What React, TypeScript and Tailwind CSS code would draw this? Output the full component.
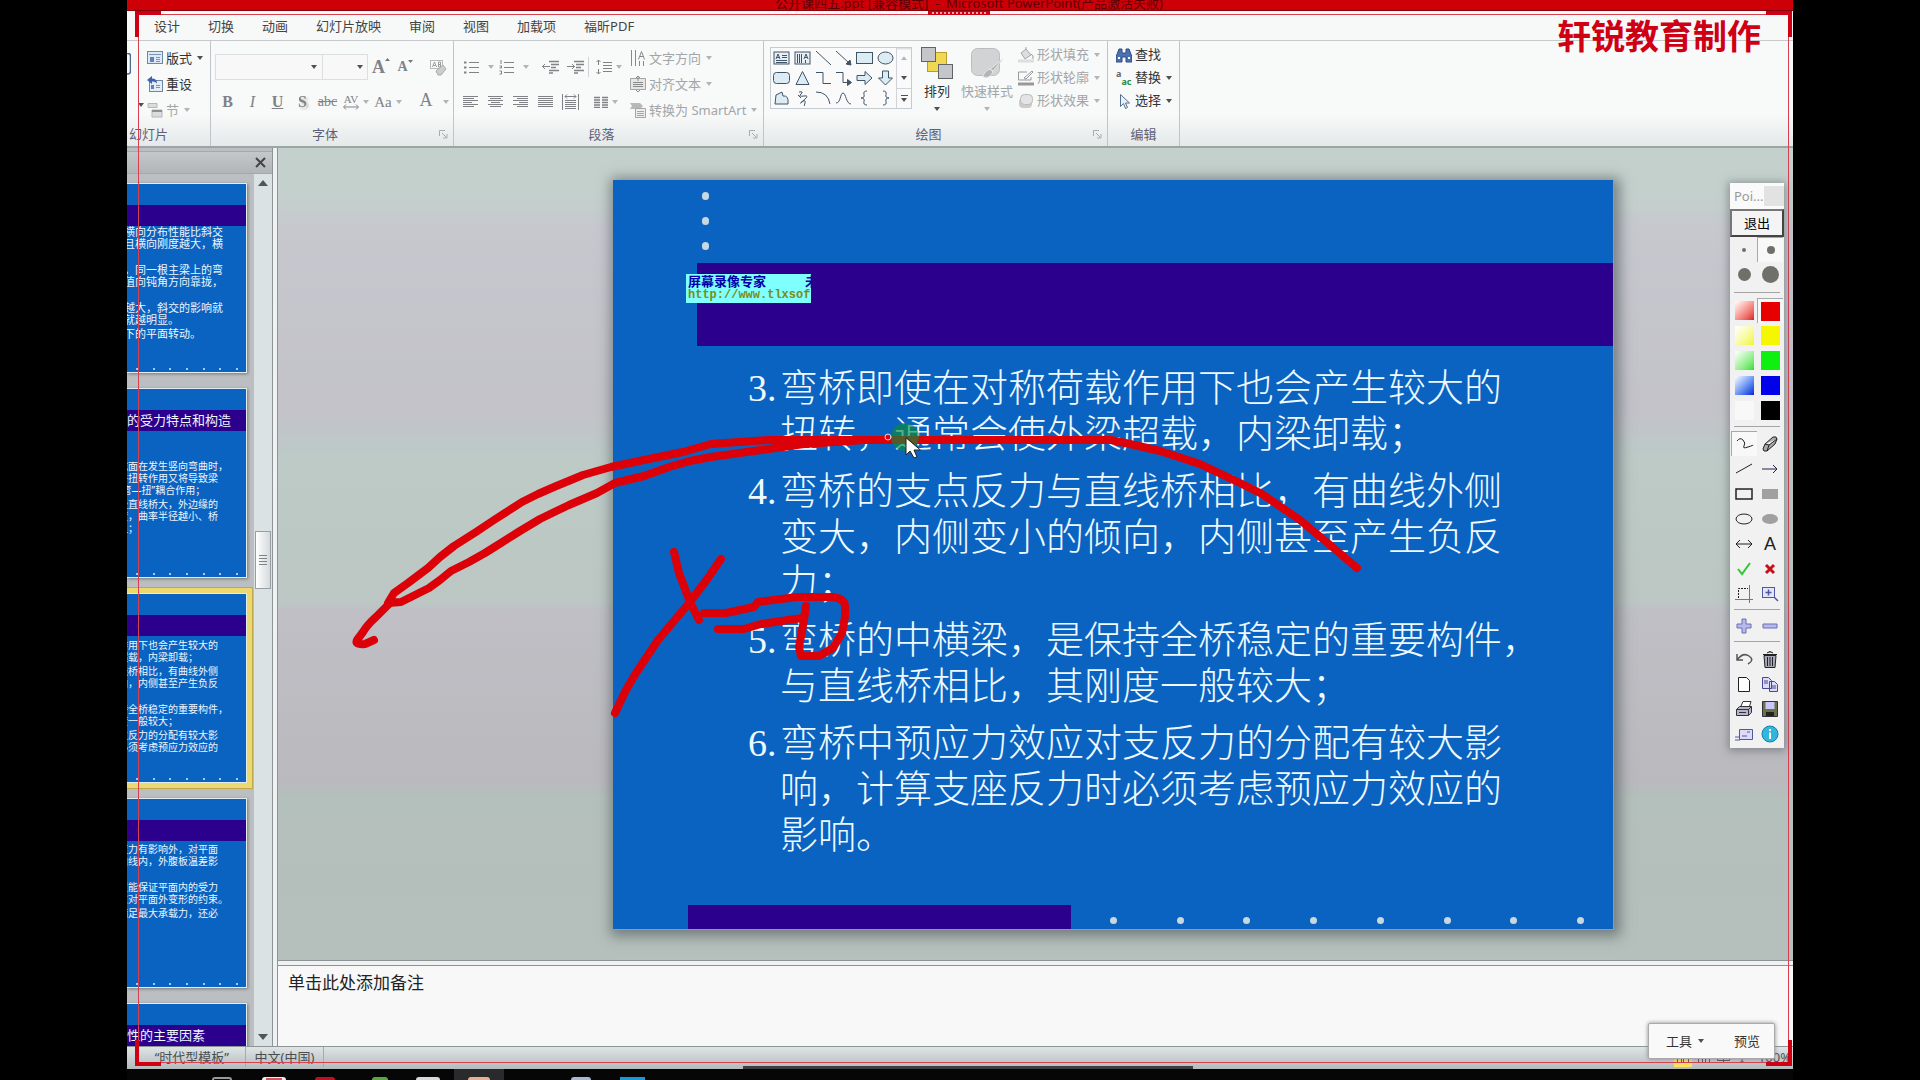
import type { ReactNode } from "react";

const uiFont = "font-['Noto_Sans','Noto_Sans_CJK_SC',sans-serif]";

const tabs = ["设计", "切换", "动画", "幻灯片放映", "审阅", "视图", "加载项", "福昕PDF"];

const slideText = [
  { no: "3.", lines: ["弯桥即使在对称荷载作用下也会产生较大的", "扭转，通常会使外梁超载，内梁卸载；"] },
  { no: "4.", lines: ["弯桥的支点反力与直线桥相比，有曲线外侧", "变大，内侧变小的倾向，内侧甚至产生负反", "力；"] },
  { no: "5.", lines: ["弯桥的中横梁，是保持全桥稳定的重要构件，", "与直线桥相比，其刚度一般较大；"] },
  { no: "6.", lines: ["弯桥中预应力效应对支反力的分配有较大影", "响，计算支座反力时必须考虑预应力效应的", "影响。"] },
];

const blank = "\u00a0";

const thumbs = [
  {
    title: "",
    body: "pt-0 -ml-[3px] text-[11px]",
    paragraphs: [
      ["横向分布性能比斜交", "且横向刚度越大，横", blank],
      ["，同一根主梁上的弯", "值向钝角方向靠拢，", blank],
      ["越大，斜交的影响就", "就越明显。"],
      ["下的平面转动。"],
    ],
  },
  {
    title: "的受力特点和构造",
    body: "pt-[29px] -ml-[9px] text-[10px]",
    paragraphs: [
      ["截面在发生竖向弯曲时，", "并扭转作用又将导致梁", "“弯—扭”耦合作用；"],
      ["径直线桥大，外边缘的", "度，曲率半径越小、桥", "显；"],
    ],
  },
  {
    title: "",
    active: true,
    body: "pt-[3px] -ml-[9px] text-[10px]",
    paragraphs: [
      ["作用下也会产生较大的", "超载，内梁卸载；"],
      ["线桥相比，有曲线外侧", "向，内侧甚至产生负反", blank],
      ["持全桥稳定的重要构件，", "度一般较大；"],
      ["支反力的分配有较大影", "必须考虑预应力效应的"],
    ],
  },
  {
    title: "",
    body: "pt-[2px] -ml-[9px] text-[10px]",
    paragraphs: [
      ["应力有影响外，对平面", "曲线内，外腹板温差影", blank],
      ["置能保证平面内的受力", "意对平面外变形的约束。"],
      ["满足最大承载力，还必"],
    ],
  },
  { title: "性的主要因素", body: "pt-0 text-[10px]", paragraphs: [] },
];

const swatches = [
  ["bg-linear-to-br from-white to-[#d8102a]", "bg-[#e60000]", "红"],
  ["bg-linear-to-br from-white to-[#f4f400]", "bg-[#f6f600]", "黄"],
  ["bg-linear-to-br from-white to-[#10e020]", "bg-[#10f010]", "绿"],
  ["bg-linear-to-br from-white to-[#1010d8]", "bg-[#0000ea]", "蓝"],
  ["bg-[#f8f8f8]", "bg-black", "黑"],
];

function Caret({ faded = false }: { faded?: boolean }) {
  return (
    <svg width="6" height="4" viewBox="0 0 6 4" className={faded ? "text-[#b4b4b4]" : "text-[#505050]"}>
      <path d="M0 0h6L3 4z" fill="currentColor" />
    </svg>
  );
}

function Divider() {
  return <span className="h-5 w-px shrink-0 bg-[#d0d3d5]" />;
}

function Icon({ w = 16, h = 16, children }: { w?: number; h?: number; children: ReactNode }) {
  return (
    <svg width={w} height={h} viewBox={`0 0 ${w} ${h}`} fill="none" stroke="currentColor" className="shrink-0">
      {children}
    </svg>
  );
}

function ToolButton({ label, className = "w-[25px]", children }: { label: string; className?: string; children: ReactNode }) {
  return (
    <button type="button" aria-label={label} className={`flex h-6 shrink-0 items-center justify-center gap-1 ${className}`}>
      {children}
    </button>
  );
}

function RowButton({ icon, text, faded, caret = true, className = "h-[26px]" }: { icon: ReactNode; text: string; faded?: boolean; caret?: boolean; className?: string }) {
  return (
    <button type="button" className={`flex items-center gap-[3px] whitespace-nowrap ${faded ? "text-[#a3a5a8]" : "text-[#333]"} ${className}`}>
      {icon}
      <span>{text}</span>
      {caret && <span className="pl-[2px]"><Caret faded={faded} /></span>}
    </button>
  );
}

function Group({ label, width, launcher = true, labelClass = "", children }: { label: string; width: string; launcher?: boolean; labelClass?: string; children: ReactNode }) {
  return (
    <section className={`flex shrink-0 flex-col border-r border-[#c0c4c8] ${width}`}>
      <div className="flex h-[82px]">{children}</div>
      <div className="flex h-6 items-center justify-center text-[#5c5f78]">
        <span className={`flex-1 text-center ${labelClass}`}>{label}</span>
        {launcher && (
          <button type="button" aria-label={`${label}设置`} className="w-[14px] text-[#a8acb0]">
            <Icon w={9} h={9}>
              <path d="M.5 6V.5H6M3 3l4 4M8 4v4H4" />
            </Icon>
          </button>
        )}
      </div>
    </section>
  );
}

function Lines({ rows }: { rows: [number, number][] }) {
  return (
    <Icon w={16} h={14}>
      {rows.map(([a, b], i) => (
        <path key={i} d={`M${a} ${i * 2 + 1.5}H${b}`} />
      ))}
    </Icon>
  );
}

function SlidesGroup() {
  return (
    <Group label="幻灯片" width="w-[84px]" launcher={false} labelClass="pr-10">
      <div className="flex w-5 flex-col justify-between overflow-hidden py-3 text-[#4a6a8c]">
        <Icon w={4} h={22}><path d="M0 .5h1Q3.500.5 3.500 3v15q0 3-2.500 3H0" strokeWidth="1.500" /></Icon>
        <span className="flex items-center gap-2 self-end pr-[3px] pb-1"><Caret /></span>
      </div>
      <div className="flex flex-col pt-1">
        <RowButton
          text="版式"
          icon={
            <Icon>
              <rect x=".5" y="1.5" width="15" height="12" fill="#dfeaf6" stroke="#6d87a8" />
              <path d="M2 4.500h12M9 7.500h4M9 9.500h4M9 11.500h4" stroke="#7a94b4" />
              <rect x="3" y="7" width="4" height="5" fill="#5c86b8" stroke="none" />
            </Icon>
          }
        />
        <RowButton
          text="重设"
          caret={false}
          icon={
            <Icon>
              <rect x="2.500" y="4.500" width="13" height="11" fill="#e4edf7" stroke="#6d87a8" />
              <path d="M9 9.500h4M9 11.500h4" stroke="#7a94b4" />
              <rect x="4" y="9" width="3" height="4" fill="#5c86b8" stroke="none" />
              <path d="M0 4l5-4v2.500q5 0 5 5Q8 5 5 5.500V8z" fill="#3d62b0" stroke="none" />
            </Icon>
          }
        />
        <RowButton
          text="节"
          faded
          icon={
            <Icon>
              <path d="M1 1.500h9M1 1.500v4h9v-4M5 8v7h10V8z" stroke="#b4b6b8" fill="#dcdcdc" />
              <path d="M5 9h10" stroke="#909090" strokeWidth="2" />
            </Icon>
          }
        />
      </div>
    </Group>
  );
}

function FontGroup() {
  return (
    <Group label="字体" width="w-[243px]">
      <div className="flex flex-col pt-2 pl-1 font-['Liberation_Serif',serif] text-[#808285]">
        <div className="flex h-9 items-center">
          <div className="relative flex">
            <select aria-label="字体" className="h-[26px] w-[108px] appearance-none border border-[#dcdee0] bg-[#f8f8f8]" />
            <span className="pointer-events-none absolute top-[11px] right-[6px]"><Caret /></span>
          </div>
          <div className="relative flex">
            <select aria-label="字号" className="h-[26px] w-[45px] appearance-none border border-l-0 border-[#dcdee0] bg-[#f8f8f8]" />
            <span className="pointer-events-none absolute top-[11px] right-[5px]"><Caret /></span>
          </div>
          <ToolButton label="增大字号" className="w-[26px]">
            <span className="flex items-start text-[18px] leading-none font-bold">A<svg width="5" height="3"><path d="M0 3h5L2.500 0z" fill="#777" /></svg></span>
          </ToolButton>
          <ToolButton label="减小字号" className="w-[22px]">
            <span className="flex items-start text-[14px] leading-none font-bold">A<svg width="5" height="3"><path d="M0 0h5L2.500 3z" fill="#777" /></svg></span>
          </ToolButton>
          <span className="pl-1"><Divider /></span>
          <ToolButton label="清除格式" className="ml-1 w-7">
            <Icon w={18} h={17}>
              <rect x="1.500" y="1.500" width="12" height="8" stroke="#b8b8b8" />
              <path d="M3.500 8l2-5 2 5M4.500 6.500h2M9.500 3v5h2V3zM9.500 5.500h2" stroke="#9a9a9a" />
              <path d="M7 12l7-6 3 4-5 6H9z" fill="#ccc" stroke="#aaa" />
            </Icon>
          </ToolButton>
        </div>
        <div className="flex h-[34px] items-center text-[16px] leading-none">
          <ToolButton label="加粗"><b>B</b></ToolButton>
          <ToolButton label="倾斜"><i>I</i></ToolButton>
          <ToolButton label="下划线"><b className="font-semibold underline">U</b></ToolButton>
          <ToolButton label="阴影"><b className="drop-shadow-[2px_2px_1px_#bbb]">S</b></ToolButton>
          <ToolButton label="删除线"><span className="text-[14px] line-through">abc</span></ToolButton>
          <ToolButton label="字符间距" className="w-8">
            <span className="flex flex-col items-center text-[11px] leading-[9px]">AV
              <Icon w={16} h={6}><path d="M1 3h14M3 .5L.5 3 3 5.500M13 .5L15.500 3 13 5.500" /></Icon>
            </span>
            <Caret faded />
          </ToolButton>
          <ToolButton label="更改大小写" className="w-8"><span className="text-[15px]">Aa</span><Caret faded /></ToolButton>
          <span className="pl-[5px]"><Divider /></span>
          <ToolButton label="字体颜色" className="ml-2 w-[34px]">
            <span className="pb-1 text-[18px]">A</span><span className="pl-[6px]"><Caret faded /></span>
          </ToolButton>
        </div>
      </div>
    </Group>
  );
}

function ParagraphGroup() {
  return (
    <Group label="段落" width="w-[310px]">
      <div className="flex w-44 flex-col pt-2 text-[#808285]">
        <div className="flex h-9 items-center pl-2">
          <ToolButton label="项目符号" className="w-[34px]">
            <Icon w={16} h={14}><path d="M5 2.500h10M5 7.500h10M5 12.500h10" /><path d="M0 2.500h2.500M0 7.500h2.500M0 12.500h2.500" strokeWidth="2" /></Icon>
            <span className="pl-1"><Caret faded /></span>
          </ToolButton>
          <ToolButton label="编号" className="w-[36px]">
            <Icon w={16} h={16}><path d="M5 3.500h10M5 8.500h10M5 13.500h10" /><path d="M2 1v4M.5 7h2v2h-2M.5 12h2v3h-2" /></Icon>
            <span className="pl-1"><Caret faded /></span>
          </ToolButton>
          <span className="px-[3px]"><Divider /></span>
          <ToolButton label="减少缩进"><Icon w={17} h={14}><path d="M7 1.500h10M9 4.500h8M9 7.500h5M7 10.500h10M7 13h4" strokeWidth="1.500" /><path d="M0 6.500h8M3 4L.5 6.500 3 9" /></Icon></ToolButton>
          <ToolButton label="增加缩进"><Icon w={17} h={14}><path d="M7 1.500h10M9 4.500h8M9 7.500h5M7 10.500h10M7 13h4" strokeWidth="1.500" /><path d="M0 6.500h8M5 4l2.500 2.500L5 9" /></Icon></ToolButton>
          <Divider />
          <ToolButton label="行距" className="w-[40px]">
            <Icon w={16} h={16}><path d="M2.500 1v5M.5 3l2-2 2 2M2.500 10v5M.5 13l2 2 2-2M7 3.500h9M7 6.500h9M7 9.500h9M7 12.500h9" /></Icon>
            <Caret faded />
          </ToolButton>
        </div>
        <div className="flex h-[34px] items-center pl-1">
          <ToolButton label="左对齐"><Lines rows={[[0, 15], [0, 11], [0, 15], [0, 9], [0, 15], [0, 11]]} /></ToolButton>
          <ToolButton label="居中"><Lines rows={[[0, 15], [2, 13], [0, 15], [3, 12], [0, 15], [2, 13]]} /></ToolButton>
          <ToolButton label="右对齐"><Lines rows={[[0, 15], [4, 15], [0, 15], [6, 15], [0, 15], [4, 15]]} /></ToolButton>
          <ToolButton label="两端对齐"><Lines rows={[[0, 15], [0, 15], [0, 15], [0, 15], [0, 15], [0, 15]]} /></ToolButton>
          <ToolButton label="分散对齐">
            <Icon w={17} h={16}><path d="M.5 0v16M16.500 0v16M3 2.500h11M3 6.500h11M3 8.500h11M3 10.500h11M3 12.500h11M3 14.500h11M5 .5l-2 2 2 2M12 .5l2 2-2 2" /></Icon>
          </ToolButton>
          <span className="pl-[3px]"><Divider /></span>
          <ToolButton label="分栏" className="w-10">
            <Icon w={14} h={12}><path d="M0 1.500h6M0 4h6M0 6.500h6M0 9h6M0 11.500h6M8 1.500h6M8 4h6M8 6.500h6M8 9h6M8 11.500h6" strokeWidth="1.500" /></Icon>
            <Caret faded />
          </ToolButton>
        </div>
      </div>
      <div className="flex flex-col pt-1">
        <RowButton faded text="文字方向" icon={<Icon><path d="M1.500 0v16M5.500 0v16M9.500 11v5M13.500 11v5M8.500 9.500l3-8 3 8M9.500 6.500h4" stroke="#888" /></Icon>} />
        <RowButton faded text="对齐文本" icon={<Icon><path d="M.5 2.500h15v11H.5z" fill="#e6e6e6" /><path d="M3 6.500h10M3 8.500h10M3 10.500h10M8 0v5M6 2l2-2 2 2M6 14l2 2 2-2" stroke="#888" /></Icon>} />
        <RowButton faded text="转换为 SmartArt" icon={<Icon><path d="M0 1h10l3 3-3 3H0l2-3z" fill="#b8b8b8" stroke="none" /><path d="M5.500 6.500h10v9h-10zM7 9.500h7M7 11.500h7M7 13.500h7" fill="#eee" /></Icon>} />
      </div>
    </Group>
  );
}

const shapes = [
  <><rect x="1" y="2" width="15" height="12" fill="#e6f0f6" /><path d="M3 9l2-5 2 5M4 7.500h2M9 5.500h5M9 7.500h5M3 10.500h11M3 12.500h11" /></>,
  <><rect x="1" y="2" width="15" height="12" fill="#e6f0f6" /><path d="M3.500 4v9M5.500 4v9M7.500 4v9M10 9l2-5 2 5M11 7.500h2M11.500 10v3" /></>,
  <path d="M1 1l15 14" />,
  <><path d="M1 1l13 12" /><path d="M16 15l-5-1 4-4z" fill="currentColor" /></>,
  <rect x=".5" y="2.500" width="16" height="11" fill="#dcecf4" />,
  <ellipse cx="8.500" cy="8" rx="7.500" ry="6" fill="#dcecf4" />,
  <rect x=".5" y="2.500" width="16" height="11" rx="3" fill="#dcecf4" />,
  <path d="M8.500 1.500l6.500 13H2z" fill="#dcecf4" />,
  <path d="M1 2.500h7v11h8" />,
  <><path d="M1 2.500h7v10h6" /><path d="M16.500 12.500l-4-3v6z" fill="currentColor" /></>,
  <path d="M1 5.500h8v-4l7 6.500-7 6.500v-4H1z" fill="#dcecf4" />,
  <path d="M5.500 1h6v7h4l-7 7-7-7h4z" fill="#dcecf4" />,
  <path d="M2 14l1-9 6-3 1 4q6-1 5 8z" fill="#dcecf4" />,
  <path d="M5 2q5-1 2 2t3 2 0 4-2 2 3 1-1 3M4 5l3 3" />,
  <path d="M1 2q12 0 14 12" />,
  <path d="M1 13C6 13 5 3 8 3s3 11 8 11" />,
  <path d="M11 1Q7 1 8 4.500T5 8q4 0 3 3.500T11 15" />,
  <path d="M6 1q4 0 3 3.500T12 8q-4 0-3 3.500T6 15" />,
];

function DrawingGroup() {
  return (
    <Group label="绘图" width="w-[344px]">
      <div className="flex w-full pt-[6px] pl-[6px]">
        <div className="flex h-[62px] w-[142px] border border-[#c4ccd2] bg-[#fafafa]">
          <div className="grid flex-1 grid-cols-6 grid-rows-3 place-items-center text-[#405468]">
            {shapes.map((shape, i) => (
              <button key={i} type="button" aria-label={`形状 ${i + 1}`}>
                <Icon w={17} h={16}>{shape}</Icon>
              </button>
            ))}
          </div>
          <div className="flex w-[15px] flex-col divide-y divide-[#d0d4d8] border-l border-[#d0d4d8]">
            <button type="button" aria-label="上一行" className="flex flex-1 rotate-180 items-center justify-center"><Caret faded /></button>
            <button type="button" aria-label="下一行" className="flex flex-1 items-center justify-center"><Caret /></button>
            <button type="button" aria-label="其他" className="flex flex-1 flex-col items-center justify-center gap-[2px]"><span className="h-px w-[7px] bg-[#505050]" /><Caret /></button>
          </div>
        </div>
        <button type="button" className="flex w-[50px] flex-col items-center text-[#333]">
          <Icon w={32} h={32}>
            <rect x="6.500" y="5.500" width="19" height="19" fill="#f0d850" stroke="#b89c30" />
            <rect x=".5" y=".5" width="14" height="14" fill="#c4c6ca" stroke="#606468" />
            <rect x="17.500" y="17.500" width="14" height="14" fill="#c4c6ca" stroke="#606468" />
          </Icon>
          <span className="pt-[3px] pb-[6px] leading-[19px]">排列</span>
          <Caret />
        </button>
        <button type="button" className="flex w-[50px] flex-col items-center whitespace-nowrap text-[#a3a5a8]">
          <Icon w={34} h={32}>
            <rect x="1.500" y="1.500" width="28" height="27" rx="6" fill="#d2d3d5" stroke="#bcbdbf" />
            <path d="M33 12L23 24l-3-2zM20 22q-6 2-7 8 7 2 10-5z" fill="#b4b5b7" stroke="#e6e6e6" />
          </Icon>
          <span className="pt-[3px] pb-[6px] leading-[19px]">快速样式</span>
          <Caret faded />
        </button>
        <div className="-mt-1 flex flex-col pl-[6px]">
          <RowButton faded className="h-[23px]" text="形状填充" icon={<Icon><path d="M3 6l5-4 5 6-6 4zM8 2V0M13 7q3 1 2 5" fill="#ddd" /><path d="M0 14h16" strokeWidth="3" stroke="#ddd" /></Icon>} />
          <RowButton faded className="h-[23px]" text="形状轮廓" icon={<Icon><path d="M9 2H.5v8H13V7M6 8l8-7 1 1-7 7z" stroke="#999" /><path d="M0 14h16" strokeWidth="3" stroke="#999" /></Icon>} />
          <RowButton faded className="h-[23px]" text="形状效果" icon={<Icon><rect x="1" y="5" width="13" height="10" rx="4" fill="#ccc" stroke="none" /><rect x="2.500" y="1.500" width="12" height="10" rx="4" fill="#e4e4e4" stroke="#bbb" /></Icon>} />
        </div>
      </div>
    </Group>
  );
}

function EditingGroup() {
  return (
    <Group label="编辑" width="w-[72px]" launcher={false}>
      <div className="flex flex-col pt-[2px] pl-2">
        <RowButton
          className="h-[23px]"
          text="查找"
          caret={false}
          icon={<Icon><path d="M3 2h3v4h4V2h3l3 8v5h-6v-5H6v5H0v-5z" fill="#4c70b0" stroke="#2c4c88" /><path d="M2 11h2M12 11h2" stroke="#fff" strokeWidth="2" /></Icon>}
        />
        <RowButton
          className="h-[23px]"
          text="替换"
          icon={
            <span className="flex w-4 items-center text-[9px] font-bold">
              <span className="pb-2 text-[#666]">a</span>
              <span className="pt-2 text-[#2c8a3c]">ac</span>
            </span>
          }
        />
        <RowButton className="h-[23px]" text="选择" icon={<Icon><path d="M4.500 1.500v12l3-3 2 5 2-1-2-4.500h4z" fill="#e8f0f8" stroke="#54708c" /></Icon>} />
      </div>
    </Group>
  );
}

function Thumbnails() {
  return (
    <aside className="flex w-[146px] shrink-0 flex-col border-r border-[#8c9498] bg-[#bbbfc1] pt-[3px]">
      <div className="flex h-[23px] shrink-0 items-center justify-end border-y border-[#a4a9ac] bg-linear-to-b from-[#c4c8ca] to-[#b0b5b8] pr-[6px] text-[#444]">
        <button type="button" aria-label="关闭">
          <Icon w={11} h={11}><path d="M1 1l9 9M10 1l-9 9" strokeWidth="2" /></Icon>
        </button>
      </div>
      <div className="flex min-h-0 flex-1">
        <div className="flex flex-1 flex-col gap-[15px] overflow-hidden pt-[9px] pr-[7px] text-[#eef6ff]">
          {thumbs.map((t, i) => (
            <div
              key={i}
              className={`flex h-[190px] shrink-0 flex-col border-y border-r border-[#e4ecf2] bg-[#0b63c1] ${t.active ? "shadow-[0_0_0_5px_#ecd870,0_0_0_6px_#c0a848]" : "shadow-[1px_1px_3px_#777]"}`}
            >
              <div className="mt-[21px] h-[21px] shrink-0 overflow-hidden bg-[#2b008c] text-[13px] leading-[21px] whitespace-nowrap">
                {t.title}
              </div>
              <div className="flex flex-1 flex-col overflow-hidden">
                <div className={`flex flex-1 flex-col gap-[2px] leading-3 whitespace-nowrap ${t.body}`}>
                  {t.paragraphs.map((p, j) => (
                    <div key={j}>
                      {p.map((line, k) => (
                        <p key={k}>{line}</p>
                      ))}
                    </div>
                  ))}
                </div>
              </div>
              <div className="flex justify-between pr-2 pb-[2px] pl-[9px]">
                {[0, 1, 2, 3, 4, 5, 6].map((d) => (
                  <i key={d} className="h-[2px] w-[2px] bg-[#a8ccec]" />
                ))}
              </div>
            </div>
          ))}
        </div>
        <div className="flex w-[18px] flex-col items-center bg-[#dbe2e3] text-[#505558]">
          <button type="button" aria-label="向上滚动" className="flex h-[18px] items-center"><svg width="10" height="6"><path d="M0 6h10L5 0z" fill="currentColor" /></svg></button>
          <div className="flex-[338]" />
          <div className="flex h-[58px] w-4 flex-col items-center justify-center gap-[2px] border border-[#989ea2] bg-linear-to-r from-white to-[#d4dadc]">
            {[0, 1, 2, 3].map((g) => (
              <i key={g} className="h-px w-2 bg-[#7c8488]" />
            ))}
          </div>
          <div className="flex-[438]" />
          <button type="button" aria-label="向下滚动" className="flex h-[18px] items-center"><svg width="10" height="6"><path d="M0 0h10L5 6z" fill="currentColor" /></svg></button>
        </div>
      </div>
    </aside>
  );
}

function Slide() {
  return (
    <article className="flex flex-1 flex-col border-r border-b border-[#7ca0c0] bg-[#0b63c1] shadow-[2px_2px_12px_4px_rgba(70,80,85,0.6)]">
      <div className="flex h-[83px] flex-col justify-between pt-3 pb-[13px] pl-[89px]">
        {[0, 1, 2].map((d) => (
          <i key={d} className="h-2 w-[7px] rounded-full bg-[#c8d8e0]" />
        ))}
      </div>
      <div className="relative ml-[84px] h-[83px] bg-[#2b008c]">
        <div className="absolute top-[11px] -left-[11px] w-[125px] overflow-hidden bg-[#80ffff] pl-[2px] text-[13px] leading-[14px] font-bold whitespace-pre">
          <p className="h-[14px] text-[#0000a8]">屏幕录像专家{"\u3000\u3000\u3000"}未</p>
          <p className="h-[15px] font-['Liberation_Mono',monospace] text-[12px] text-[#7c8c10]">http://www.tlxsoft.com</p>
        </div>
      </div>
      <ol className="flex flex-col gap-[11px] pt-[19px] pl-[135px] font-['Liberation_Serif','Noto_Sans_CJK_SC',serif] text-[38px] leading-[46px] font-light whitespace-nowrap text-[#eefaff]">
        {slideText.map((item) => (
          <li key={item.no} className="flex">
            <span className="w-[32px]">{item.no}</span>
            <div>
              {item.lines.map((line) => (
                <p key={line}>{line}</p>
              ))}
            </div>
          </li>
        ))}
      </ol>
      <div className="mt-auto flex h-6">
        <div className="ml-[75px] w-[383px] bg-[#2b008c]" />
        <div className="flex flex-1 items-center justify-between pt-[6px] pr-[29px] pl-[39px]">
          {[0, 1, 2, 3, 4, 5, 6, 7].map((d) => (
            <i key={d} className="h-[7px] w-[7px] rounded-full bg-[#c8d8e0]" />
          ))}
        </div>
      </div>
    </article>
  );
}

const penTools: [string, ReactNode][] = [
  ["手绘", <path d="M1 6q3-4 6-1t1 6 4 1 5-2" stroke="#222" />],
  ["橡皮擦", <path d="M2 14l2-5 8-7q4-1 4 2l-2 5-8 7H3zM4 9l4 1 8-6M8 10l-2 6" fill="#aaa" stroke="#222" />],
  ["直线", <path d="M1 13L17 4" stroke="#222" />],
  ["箭头", <path d="M1 9h15M12 5l4 4-4 4" stroke="#224" />],
  ["矩形", <rect x="1" y="4" width="16" height="10" stroke="#222" strokeWidth="1.500" />],
  ["填充矩形", <rect x="1" y="4" width="16" height="10" fill="#a0a0a0" stroke="none" />],
  ["椭圆", <ellipse cx="9" cy="9" rx="8" ry="5" stroke="#222" />],
  ["填充椭圆", <ellipse cx="9" cy="9" rx="8" ry="5" fill="#a0a0a0" stroke="none" />],
  ["双向箭头", <path d="M1 9h16M5 5L1 9l4 4M13 5l4 4-4 4" stroke="#222" />],
  ["文字", "A"],
  ["对勾", <path d="M3 9l4 5L15 3" stroke="#30c830" strokeWidth="2" />],
  ["叉号", <path d="M5 5l8 8M13 5l-8 8" stroke="#c81018" strokeWidth="3" />],
  ["裁剪", <><path d="M14.500 0v18M0 14.500h18" stroke="#777" /><path d="M3.500 13V3.500H13" stroke="#222" strokeDasharray="2 1" /></>],
  ["放大", <><rect x="1.500" y="2.500" width="12" height="10" stroke="#5058a0" fill="#e4e4fa" /><path d="M7.500 4.500v6M4.500 7.500h6M13 12l4 4" stroke="#5058a0" strokeWidth="1.500" /></>],
];

const fileTools: [string, ReactNode][] = [
  ["撤销", <path d="M2 4v6h6M2.500 9.500Q8 2 14 6t-1 8" stroke="#555" strokeWidth="1.500" />],
  ["清空", <path d="M3 5.500h12l-1 12H4zM2 4.500h14M6 3q3-3 6 0M6.500 7v9M9 7v9M11.500 7v9" fill="#a8a8b8" stroke="#222" />],
  ["新建", <path d="M3.500 2.500h8l3 3v11h-11z" fill="#fff" stroke="#222" />],
  ["复制", <path d="M1.500 2.500h6l3 3v8h-9zM8.500 6.500h5l3 3v7h-8zM3 6h4M3 8h4M10 11h5M10 13h5" fill="#dcdcfa" stroke="#484890" />],
  ["打印", <><path d="M6 6l2-4.500h8L14 8" fill="#fff" stroke="#333" /><path d="M1.500 9.500l3-3h12v6l-3 3h-12z" fill="#b4b4cc" stroke="#333" /><path d="M1.500 9.500h12v6M13.500 9.500l3-3M4 12.500h7" stroke="#333" /></>],
  ["保存", <><path d="M1.500 1.500h15v15h-15z" fill="#6c7048" stroke="#333" /><path d="M4.500 2h9v7h-9z" fill="#c8c8fa" stroke="none" /><path d="M5 12h8v4H5z" fill="#222" stroke="none" /></>],
  ["发送", <><path d="M4.500 4.500h13v10h-13z" fill="#dcdcfa" stroke="#5058a0" /><path d="M7 11h5M12 7h3M0 12h4M0 15h5" stroke="#5058a0" /></>],
  ["关于", <><circle cx="9" cy="9" r="8" fill="#30b8dc" stroke="#1880a8" /><path d="M9 4v2M9 7.500V14" stroke="#fff" strokeWidth="2" /></>],
];

function PenCell({ label, children, on = false }: { label: string; children: ReactNode; on?: boolean }) {
  return (
    <button
      type="button"
      aria-label={label}
      className={`flex h-[25px] items-center justify-center ${on ? "border-t border-l border-[#a8a8a8] bg-[#f8f8f8]" : ""}`}
    >
      {children}
    </button>
  );
}

function PenGlyph({ glyph }: { glyph: ReactNode }) {
  if (typeof glyph === "string") {
    return <span className="font-['Liberation_Sans',sans-serif] text-[18px] leading-none text-[#222]">{glyph}</span>;
  }
  return <Icon w={18} h={18}>{glyph}</Icon>;
}

function PenPanel() {
  return (
    <div className="absolute top-[183px] right-[136px] flex w-[54px] flex-col bg-[#f1f1f1] pb-[2px] shadow-[0_1px_8px_2px_rgba(80,90,95,0.5)]">
      <div className="flex h-[26px] items-center bg-[#fafafa] pl-1 text-[13px] text-[#999]">
        <span className="flex-1">Poi...</span>
        <span className="h-5 w-5 bg-[#e2e2e2]" />
      </div>
      <button type="button" className="h-7 border-2 border-t-[#777] border-r-[#444] border-b-[#444] border-l-[#777] bg-[#f4f4f4] text-[13px] leading-none text-black">
        退出
      </button>
      <div className="grid grid-cols-2 px-px">
        <PenCell label="极细"><i className="h-1 w-1 rounded-full bg-[#70706a]" /></PenCell>
        <PenCell label="细" on><i className="h-2 w-2 rounded-full bg-[#70706a]" /></PenCell>
        <PenCell label="中"><i className="h-[13px] w-[13px] rounded-full bg-[#70706a]" /></PenCell>
        <PenCell label="粗"><i className="h-[17px] w-[17px] rounded-full bg-[#70706a]" /></PenCell>
      </div>
      <hr className="mx-1 mt-[5px] mb-[5px] border-[#a4a4a4]" />
      <div className="grid grid-cols-2 px-px">
        {swatches.flatMap(([soft, solid, name]) => [
          <PenCell key={`${name}-soft`} label={`透明${name}色`}><i className={`h-[19px] w-[19px] ${soft}`} /></PenCell>,
          <PenCell key={name} label={`${name}色`} on={name === "红"}><i className={`h-[19px] w-[19px] ${solid}`} /></PenCell>,
        ])}
      </div>
      <hr className="mx-1 mt-[3px] mb-1 border-[#a4a4a4]" />
      <div className="grid grid-cols-2 px-px">
        {penTools.map(([label, glyph], i) => (
          <PenCell key={label} label={label} on={i === 0}><PenGlyph glyph={glyph} /></PenCell>
        ))}
      </div>
      <hr className="mx-1 my-[3px] border-[#a4a4a4]" />
      <div className="grid grid-cols-2 px-px">
        <PenCell label="加粗线条"><Icon w={16} h={16}><path d="M6 1h4v5h5v4h-5v5H6v-5H1V6h5z" fill="#b8b8ee" stroke="#6870b0" /></Icon></PenCell>
        <PenCell label="减细线条"><Icon w={16} h={16}><path d="M1 6h14v4H1z" fill="#b8b8ee" stroke="#6870b0" /></Icon></PenCell>
      </div>
      <hr className="mx-1 mt-[3px] mb-1 border-[#a4a4a4]" />
      <div className="grid grid-cols-2 px-px">
        {fileTools.map(([label, glyph]) => (
          <PenCell key={label} label={label}><PenGlyph glyph={glyph} /></PenCell>
        ))}
      </div>
    </div>
  );
}

/* Hand-drawn pen strokes plus the highlighted pointer */
function Ink() {
  return (
    <svg className="pointer-events-none absolute inset-0 h-full w-full" fill="none" strokeLinecap="round" strokeLinejoin="round">
      <g stroke="#dc0008" strokeWidth="8">
        <path d="M1357 568L1330 545 1300 520 1262 494 1240 483 1200 464 1160 451 1130 444 1111 440H870L769 440 711 444 683 452 644 460 611 467 583 475 554 487 538 494 522 502 508 511 494 520 476 532 454 546 440 557 428 568 408 583 394 593 388 603 401 602 415 595 429 588 440 580 451 571 469 562 485 553 501 543 520 531 540 519 569 505 597 493 615 483 644 476 669 467 690 461 711 457 761 450 804 444 865 440" />
        <path d="M390 603L376 617Q367 625 363 632L357 640Q354 645 365 644L374 640" />
        <path d="M674 552L679 573 690 602 699 620M721 559L708 578 690 602 658 640 636 673 626 690 615 713" />
        <path d="M704 613L726 613 754 607 758 602 797 597 833 597Q845 599 845 606L845 617 842 633 833 648 819 656H801L799 647 804 620 806 606M718 629H744L761 624 802 618" />
      </g>
      <circle cx="905" cy="437" r="14" fill="#0a8a3c" fillOpacity="0.65" />
      <circle cx="888" cy="437" r="3" stroke="#e8d0d0" />
      <path d="M906 438v17l4-4 4 7 3-1-3-7h6z" fill="#fff" stroke="#222" strokeWidth="1" />
    </svg>
  );
}

/* Recording area outline with its corner grips */
function RecordFrame() {
  return (
    <div className="pointer-events-none absolute top-[11px] right-[128px] bottom-[14px] left-[135px]">
      <div className="absolute inset-[3px] border border-[#d84050]" />
      <i className="absolute top-0 left-0 h-[26px] w-[26px] border-t-4 border-l-4 border-[#d00014]" />
      <i className="absolute top-0 right-0 h-[26px] w-[26px] border-t-4 border-r-4 border-[#d00014]" />
      <i className="absolute bottom-0 left-0 h-[26px] w-[26px] border-b-4 border-l-4 border-[#d00014]" />
      <i className="absolute right-0 bottom-0 h-[26px] w-[26px] border-r-4 border-b-4 border-[#d00014]" />
      <i className="absolute top-0 left-1/2 flex h-1 w-[62px] -translate-x-[36px] items-center bg-[#d00014] px-1">
        <i className="w-full border-t-2 border-dotted border-[#f4a0a8]" />
      </i>
    </div>
  );
}

function StatusBar() {
  return (
    <footer className="relative flex h-[23px] shrink-0 items-center border-t border-[#8c9498] bg-linear-to-b from-[#dfe4e5] to-[#b4bbbd] pb-[2px] text-[13px] leading-none text-[#4a4e50]">
      <span className="flex h-full w-[119px] items-center justify-end border-r border-[#a4abad] pr-4">“时代型模板”</span>
      <button type="button" className="flex h-full w-[78px] items-center justify-center border-r border-[#a4abad]">中文(中国)</button>
      <div className="flex flex-1 items-center justify-end gap-[6px] pr-[2px]">
        <button type="button" aria-label="普通视图" className="flex h-5 w-[18px] items-end justify-center bg-[#ffe060] pb-1"><Icon w={12} h={10}><path d="M.5.5h4v9h-4zM6.500.5h5v9h-5z" /></Icon></button>
        <button type="button" aria-label="幻灯片浏览"><Icon w={13} h={12}><path d="M.5.5h4v4h-4zM7.500.5h4v4h-4zM.5 7.500h4v4h-4zM7.500 7.500h4v4h-4z" /></Icon></button>
        <button type="button" aria-label="阅读视图"><Icon w={13} h={12}><path d="M.5 2.500h12v7H.5zM6.500 2v9" /></Icon></button>
        <button type="button" aria-label="幻灯片放映"><Icon w={12} h={12}><path d="M0 1.500h12M2 2v5h8V2M6 7v4M4 11h4" /></Icon></button>
        <button type="button" className="pl-1">100%</button>
      </div>
      <i className="absolute bottom-0 left-[37%] h-[3px] w-[27%] bg-[#3c3e40]" />
    </footer>
  );
}

function Taskbar() {
  return (
    <nav aria-label="任务栏" className="relative flex h-[11px] shrink-0 items-end overflow-hidden bg-[#060606]">
      <div className="flex h-full items-end pl-[85px]">
        <i className="mr-[30px] h-[3px] w-5 rounded-t-full border-2 border-b-0 border-[#999]" />
        <i className="mr-[29px] h-[3px] w-6 rounded-t border-x-4 border-t border-[#eee] bg-[#d05060]" />
        <i className="mr-[37px] h-[3px] w-5 rounded-t-full bg-[#c01020]" />
        <i className="mr-[28px] h-[3px] w-4 rounded-t-full bg-[#58a840]" />
        <i className="mr-[14px] h-[3px] w-6 rounded-t bg-[#d8d8d8]" />
        <div className="flex h-full w-[50px] items-end justify-center bg-[#2a2a2c]"><i className="h-[3px] w-[22px] rounded-t bg-[#e8b090]" /></div>
        <i className="mr-[29px] ml-[67px] h-[3px] w-5 rounded-t bg-[#a8b8d0]" />
        <i className="h-[3px] w-[25px] bg-[#1898d8]" />
      </div>
    </nav>
  );
}

export default function App() {
  return (
    <div className={`relative flex h-screen min-h-[1080px] flex-col overflow-hidden bg-black px-[127px] text-[13px] leading-none ${uiFont}`}>
      <header className="shrink-0 bg-[#f7f8f8]">
        <div className="flex h-[11px] items-end justify-center overflow-hidden border-b border-[#880008] bg-[#cc0006] pl-[18px] text-[13px] text-[#5c0008]">
          <h1 className="h-[16px] leading-[18px] whitespace-pre">公开课四五.ppt [兼容模式]  -  Microsoft PowerPoint(产品激活失败)</h1>
        </div>
        <div className="flex h-[30px] items-end gap-7 border-b border-[#c6cacc] pb-[7px] pl-[27px] text-[#444]">
          {tabs.map((tab) => (
            <button key={tab} type="button">{tab}</button>
          ))}
        </div>
        <div className="flex h-[107px] border-b-2 border-[#9ca4a4] bg-linear-to-b from-[#f8f9f9] from-70% to-[#e4e9e9]">
          <SlidesGroup />
          <FontGroup />
          <ParagraphGroup />
          <DrawingGroup />
          <EditingGroup />
        </div>
      </header>

      <div className="flex min-h-0 flex-1 bg-[#f0f2f2]">
        <Thumbnails />
        <main className="ml-1 flex min-w-0 flex-1 flex-col border-l border-[#8c9498]">
          <div className="flex flex-1 border-b border-[#8c9498] bg-[linear-gradient(#c4d0cc_0%,#c4d0cc_6%,#c6c8ce_10%,#c3c2c9_32%,#bdcac6_38%,#bcc7c3_56%,#bfbfc5_57%,#bab9be_78%,#b4c0bb_80%,#b5bfbb_100%)] pt-8 pr-[179px] pb-[30px] pl-[335px]">
            <Slide />
          </div>
          <textarea
            aria-label="备注"
            defaultValue="单击此处添加备注"
            className="mt-1 h-[81px] shrink-0 resize-none border-t border-[#8c9498] bg-[#f8f8f8] px-[10px] pt-[7px] text-[17px] leading-5 text-[#222] outline-none"
          />
        </main>
      </div>

      <StatusBar />
      <Taskbar />

      <Ink />
      <RecordFrame />
      <p className="absolute top-[18px] right-[159px] text-[34px] leading-9 font-bold text-[#d00014]">轩锐教育制作</p>
      <PenPanel />
      <div className="absolute right-[145px] bottom-[21px] flex h-9 w-[127px] items-center justify-between rounded-[2px] border border-[#aaa] bg-[#f9f9f9] pr-[14px] pl-[17px] text-[#333] shadow-[0_0_4px_#888]">
        <button type="button" className="flex items-center gap-[6px]">工具 <Caret /></button>
        <button type="button">预览</button>
      </div>
    </div>
  );
}
